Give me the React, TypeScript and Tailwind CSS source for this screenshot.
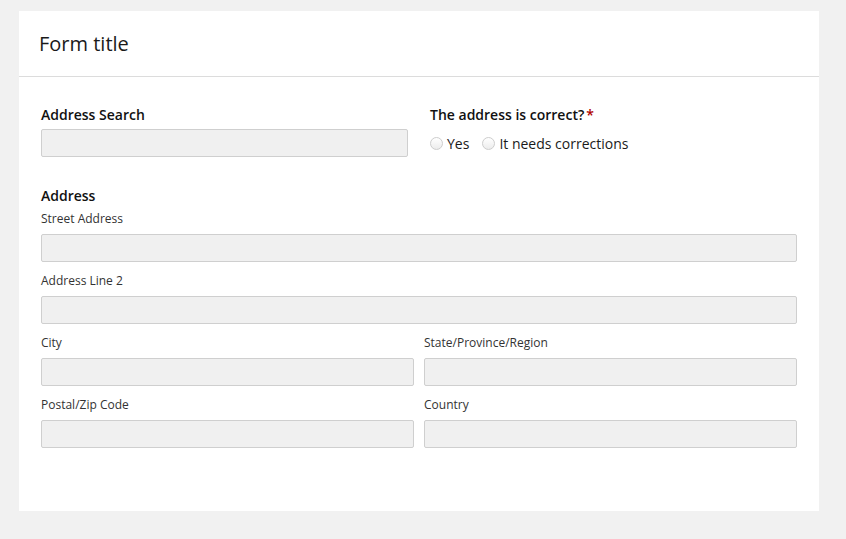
function Field({ label }: { label: string }) {
  return (
    <div className="flex flex-col">
      <label className="text-[12px] leading-[20px] text-[#333]">{label}</label>
      <div className="mt-[5px] h-[28px] rounded-[2px] border border-[#cfcfcf] bg-[#f0f0f0]" />
    </div>
  );
}

function Radio({ label }: { label: string }) {
  return (
    <label className="flex items-center">
      <span className="h-[13px] w-[13px] rounded-full border border-[#cdcdcd] bg-gradient-to-b from-white to-[#ececec]" />
      <span className="ml-[4px] text-[14px] text-[#1a1a1a]">{label}</span>
    </label>
  );
}

export default function App() {
  return (
    <div
      className="min-h-[539px] w-full bg-[#f1f1f1] pt-[11px] pl-[19px]"
      style={{ fontFamily: '"Open Sans", "Liberation Sans", sans-serif' }}
    >
      <div className="h-[500px] w-[800px] bg-white">
        <div className="flex h-[66px] items-center border-b border-[#dcdcdc] pl-[20px]">
          <h1 className="text-[20px] text-[#1a1a1a]">Form title</h1>
        </div>

        <div className="px-[22px] pt-[28px]">
          <div className="flex">
            <div className="w-[367px]">
              <div className="text-[14px] leading-[20px] font-semibold text-[#111]">Address Search</div>
              <div className="mt-[4px] h-[28px] rounded-[2px] border border-[#cfcfcf] bg-[#f0f0f0]" />
            </div>
            <div className="ml-[22px]">
              <div className="text-[14px] leading-[20px] font-semibold text-[#111]">
                The address is correct?<span className="ml-[2px] text-[#b00000]">*</span>
              </div>
              <div className="mt-[4px] flex h-[28px] items-center gap-[13px]">
                <Radio label="Yes" />
                <Radio label="It needs corrections" />
              </div>
            </div>
          </div>

          <div className="mt-[29px]">
            <div className="text-[14px] leading-[20px] font-semibold text-[#111]">Address</div>
            <div className="mt-[3px] flex flex-col gap-[9px]">
              <Field label="Street Address" />
              <Field label="Address Line 2" />
              <div className="grid grid-cols-2 gap-x-[10px] gap-y-[9px]">
                <Field label="City" />
                <Field label="State/Province/Region" />
                <Field label="Postal/Zip Code" />
                <Field label="Country" />
              </div>
            </div>
          </div>
        </div>
      </div>
    </div>
  );
}
